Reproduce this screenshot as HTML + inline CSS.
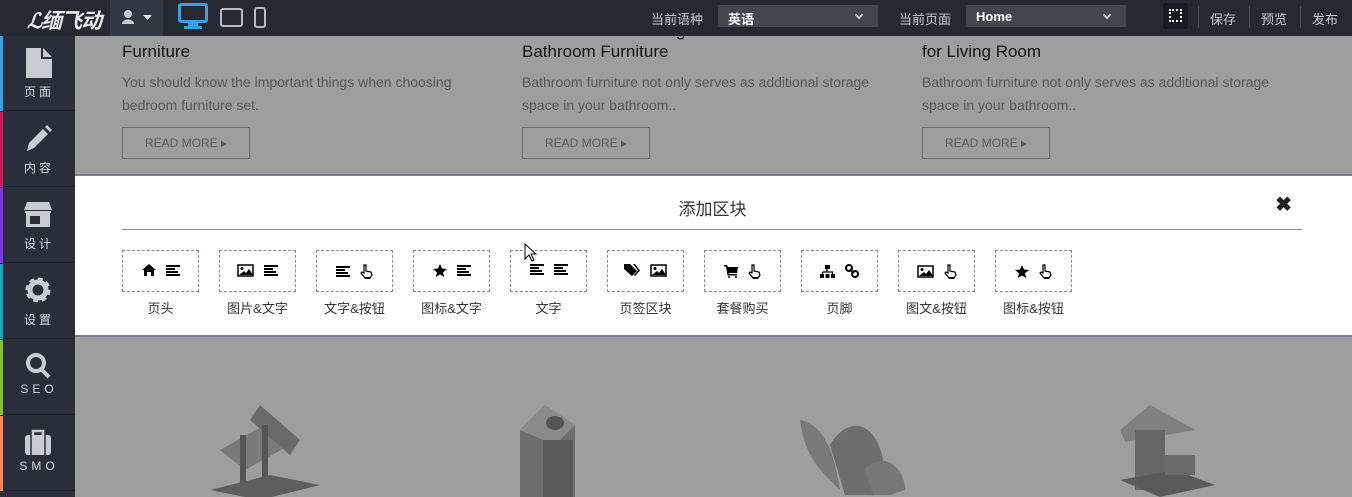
<!DOCTYPE html>
<html><head><meta charset="utf-8">
<style>
*{margin:0;padding:0;box-sizing:border-box}
body{width:1352px;height:497px;overflow:hidden;background:#9e9e9e;font-family:"Liberation Sans","Noto Sans CJK SC",sans-serif;position:relative}
.top{position:absolute;left:0;top:0;width:1352px;height:36px;background:#262932;color:#c9cbd2;font-size:13px}
.top .t{position:absolute;top:9px}
.sel{position:absolute;top:5px;height:22px;background:#43464d;color:#fff;font-size:13px;font-weight:bold;padding:4px 10px}
.sel .ch{position:absolute;right:16px;top:7px;width:6px;height:6px;border-right:2px solid #ccc;border-bottom:2px solid #ccc;transform:rotate(45deg)}
.sep{position:absolute;top:6px;width:1px;height:22px;background:#444851}
.side{position:absolute;left:0;top:36px;width:75px;height:461px;background:#2a2e3b}
.it{position:absolute;left:0;width:75px;height:75px;border-bottom:1px solid #1f222c}
.it .bar{position:absolute;left:0;top:0;width:3px;height:75px}
.it .lb{position:absolute;left:0;width:75px;text-align:center;top:47px;color:#d8dae3;font-size:12px;letter-spacing:3px;padding-left:3px}
.it svg{position:absolute;left:24px;top:12px}
.art{position:absolute;top:0;width:380px}
.art .h{position:absolute;top:20px;left:0;font-size:17px;color:#151515;line-height:21px;white-space:nowrap}
.art .d{position:absolute;top:71px;left:0;font-size:14px;color:#575757;line-height:23px;white-space:nowrap}
.art .b{position:absolute;top:127px;left:0;width:128px;height:32px;border:1px solid #6e6e6e;font-size:12px;color:#5a5a5a;text-align:center;line-height:30px}
.panel{position:absolute;left:75px;top:174px;width:1277px;height:163px;background:#fff;border-top:2px solid #7a7f98;border-bottom:2px solid #7a7f98}
.blk{position:absolute;top:74px;width:77px;height:42px;border:1px dashed #8a84a6}
.blk .ic{position:absolute;left:0;right:0;top:13px;text-align:center;font-size:0}
.blk .ic svg{margin:0 5px;vertical-align:middle}
.bl{position:absolute;top:124px;width:77px;text-align:center;font-size:13px;color:#333}
</style></head><body>
<div class="side">
 <div class="it" style="top:0"><div class="bar" style="background:#3b9fe0"></div><svg width="28" height="30" viewBox="0 0 28 30"><path d="M2 0h15v11h11v19H2zM19 0l9 9h-9z" fill="#c9cbd4"/></svg><div class="lb">页面</div></div>
 <div class="it" style="top:76px"><div class="bar" style="background:#c21e56"></div><svg width="28" height="30" viewBox="0 0 28 30"><path d="M3 27l2-8L19 5l5 5-14 14zM21 3l2-2 5 5-2 2z" fill="#c9cbd4"/></svg><div class="lb">内容</div></div>
 <div class="it" style="top:152px"><div class="bar" style="background:#7b3ad4"></div><svg width="28" height="30" viewBox="0 0 28 30"><path d="M3 2h22l3 8H0zM1 11h26v2H1zM2 13h24v14H2z" fill="#c9cbd4"/><rect x="6" y="16" width="10" height="8" fill="#2a2e3b"/></svg><div class="lb">设计</div></div>
 <div class="it" style="top:228px"><div class="bar" style="background:#1ca3bb"></div><svg width="28" height="30" viewBox="0 0 28 30"><circle cx="14" cy="14" r="9" fill="none" stroke="#c9cbd4" stroke-width="7" stroke-dasharray="4 3"/><circle cx="14" cy="14" r="8" fill="none" stroke="#c9cbd4" stroke-width="5"/></svg><div class="lb">设置</div></div>
 <div class="it" style="top:304px"><div class="bar" style="background:#8bbb3b"></div><svg width="28" height="30" viewBox="0 0 28 30"><circle cx="12" cy="11" r="8" fill="none" stroke="#c9cbd4" stroke-width="4"/><path d="M17 17l8 8" stroke="#c9cbd4" stroke-width="4"/></svg><div class="lb" style="letter-spacing:4px;top:42px">SEO</div></div>
 <div class="it" style="top:380px"><div class="bar" style="background:#f58a58"></div><svg width="28" height="30" viewBox="0 0 28 30"><path d="M9 7V3h10v4" fill="none" stroke="#c9cbd4" stroke-width="2.5"/><rect x="1" y="7" width="26" height="20" rx="3" fill="#c9cbd4"/><path d="M7 7v20M21 7v20" stroke="#2a2e3b" stroke-width="1.5"/></svg><div class="lb" style="letter-spacing:4px;top:43px">SMO</div></div>
</div>

<div class="art" style="left:122px"><div class="h">How to Choose Bedroom<br>Furniture</div><div class="d">You should know the important things when choosing<br>bedroom furniture set.</div><div class="b">READ MORE ▸</div></div>
<div class="art" style="left:522px"><div class="h">How to Select the Right<br>Bathroom Furniture</div><div class="d">Bathroom furniture not only serves as additional storage<br>space in your bathroom..</div><div class="b">READ MORE ▸</div></div>
<div class="art" style="left:922px"><div class="h">How to Choose Furniture<br>for Living Room</div><div class="d">Bathroom furniture not only serves as additional storage<br>space in your bathroom..</div><div class="b">READ MORE ▸</div></div>

<svg style="position:absolute;left:200px;top:395px" width="130" height="102"><path d="M20 55l45-25 25 20-45 25z" fill="#7a7a7a"/><path d="M60 10l40 35-10 15-40-35z" fill="#6a6a6a"/><rect x="40" y="40" width="6" height="55" fill="#555"/><rect x="62" y="30" width="6" height="65" fill="#555"/><path d="M10 95l60-15 50 10-60 15z" fill="#5e5e5e"/></svg>
<svg style="position:absolute;left:515px;top:405px" width="80" height="92"><path d="M5 25L30 0l30 20v72H5z" fill="#6e6e6e"/><path d="M30 0l30 20-20 20L5 25z" fill="#8a8a8a"/><ellipse cx="40" cy="18" rx="9" ry="7" fill="#555"/><path d="M28 35h30v57H28z" fill="#5a5a5a"/></svg>
<svg style="position:absolute;left:795px;top:415px" width="135" height="80"><path d="M5 5c25 5 35 35 40 70C30 60 10 45 5 5z" fill="#7a7a7a"/><path d="M35 30c20-35 60-25 55 55L50 80z" fill="#6e6e6e"/><path d="M70 55c15-20 40-5 40 20l-30 10z" fill="#777"/></svg>
<svg style="position:absolute;left:1105px;top:405px" width="120" height="92"><path d="M15 25L45 0l45 25-70 12z" fill="#808080"/><rect x="30" y="25" width="30" height="60" fill="#666"/><path d="M15 75l55-10 40 15-55 12z" fill="#5a5a5a"/><rect x="60" y="50" width="30" height="20" fill="#6a6a6a"/></svg>

<div class="panel">
 <div style="position:absolute;left:0;width:1275px;top:19px;text-align:center;font-size:17px;color:#333">添加区块</div>
 <div style="position:absolute;right:60px;top:16px;font-size:20px;font-weight:bold;color:#222">✖</div>
 <div style="position:absolute;left:47px;top:53px;width:1180px;height:1px;background:#8a8ba0"></div>
</div>

<div class="top">
 <div style="position:absolute;left:27px;top:5px;font-size:21px;font-style:italic;font-weight:bold;color:#e8e8e8;letter-spacing:-1px">&#x2112;缅飞动</div>
 <div style="position:absolute;left:110px;top:0;width:53px;height:36px;background:#333743"><svg style="position:absolute;left:12px;top:10px" width="30" height="14"><circle cx="6" cy="4" r="4" fill="#c9cbd4"/><path d="M0 14c0-6 12-6 12 0z" fill="#c9cbd4"/><path d="M21 5h9l-4.5 5z" fill="#e0e0e0"/></svg></div>
 <svg style="position:absolute;left:178px;top:3px" width="30" height="26"><rect x="1.5" y="1.5" width="27" height="17" rx="1.5" fill="none" stroke="#3b9fe0" stroke-width="3"/><path d="M10 20h10v3h4v3H6v-3h4z" fill="#3b9fe0"/></svg>
 <svg style="position:absolute;left:220px;top:8px" width="23" height="19"><rect x="1" y="1" width="21" height="17" rx="2" fill="none" stroke="#b8bac2" stroke-width="2"/></svg>
 <svg style="position:absolute;left:254px;top:7px" width="12" height="21"><rect x="1" y="1" width="10" height="19" rx="2" fill="none" stroke="#b8bac2" stroke-width="2"/></svg>
 <div class="t" style="left:651px">当前语种</div>
 <div class="sel" style="left:718px;width:160px">英语<span class="ch"></span></div>
 <div class="t" style="left:899px">当前页面</div>
 <div class="sel" style="left:966px;width:160px">Home<span class="ch"></span></div>
 <div style="position:absolute;left:1163px;top:3px;width:25px;height:26px;background:#181a1f;border-radius:3px"><div style="position:absolute;left:6px;top:6px;width:13px;height:13px;border:2px dotted #fff"></div></div>
 <div class="sep" style="left:1198px"></div><div class="t" style="left:1210px">保存</div>
 <div class="sep" style="left:1249px"></div><div class="t" style="left:1261px">预览</div>
 <div class="sep" style="left:1300px"></div><div class="t" style="left:1312px">发布</div>
</div>

<div style="position:absolute;left:0;top:0">
<div class="blk" style="left:122px;top:250px"><div class="ic"><svg width="14" height="12" viewBox="0 0 14 12"><path d="M7 0l7 6h-2v6H9V8H5v4H2V6H0z"/></svg><svg width="14" height="11" viewBox="0 0 14 11"><path d="M0 0h14v2H0zM0 3h9v2H0zM0 6h12v2H0zM0 9h14v2H0z"/></svg></div></div>
<div class="bl" style="left:122px;top:298px">页头</div>
<div class="blk" style="left:219px;top:250px"><div class="ic"><svg width="17" height="13" viewBox="0 0 17 13"><rect x="1" y="1" width="15" height="11" fill="none" stroke="#000" stroke-width="1.5"/><circle cx="5" cy="4.5" r="1.5"/><path d="M2 11l5-4 2 2 3-4 4 6z"/></svg><svg width="14" height="11" viewBox="0 0 14 11"><path d="M0 0h14v2H0zM0 3h9v2H0zM0 6h12v2H0zM0 9h14v2H0z"/></svg></div></div>
<div class="bl" style="left:219px;top:298px">图片&amp;文字</div>
<div class="blk" style="left:316px;top:250px"><div class="ic"><svg width="14" height="11" viewBox="0 0 14 11"><path d="M0 0h14v2H0zM0 3h9v2H0zM0 6h12v2H0zM0 9h14v2H0z"/></svg><svg width="13" height="15" viewBox="0 0 13 15"><path d="M4 1h2v6l5 1 1 3-2 3H5L1 9l1-1 2 1z" fill="none" stroke="#000" stroke-width="1.2"/><rect x="5" y="13" width="5" height="2"/></svg></div></div>
<div class="bl" style="left:316px;top:298px">文字&amp;按钮</div>
<div class="blk" style="left:413px;top:250px"><div class="ic"><svg width="14" height="13" viewBox="0 0 14 13"><path d="M7 0l2 4.5 5 .5-4 3.3 1.2 4.7L7 10.5 2.8 13 4 8.3 0 5l5-.5z"/></svg><svg width="14" height="11" viewBox="0 0 14 11"><path d="M0 0h14v2H0zM0 3h9v2H0zM0 6h12v2H0zM0 9h14v2H0z"/></svg></div></div>
<div class="bl" style="left:413px;top:298px">图标&amp;文字</div>
<div class="blk" style="left:510px;top:250px"><div class="ic"><svg width="14" height="11" viewBox="0 0 14 11"><path d="M0 0h14v2H0zM0 3h9v2H0zM0 6h12v2H0zM0 9h14v2H0z"/></svg><svg width="14" height="11" viewBox="0 0 14 11"><path d="M0 0h14v2H0zM0 3h9v2H0zM0 6h12v2H0zM0 9h14v2H0z"/></svg></div></div>
<div class="bl" style="left:510px;top:298px">文字</div>
<div class="blk" style="left:607px;top:250px"><div class="ic"><svg width="16" height="13" viewBox="0 0 16 13"><path d="M0 0h6l7 7-5 5-8-7z"/><path d="M9 0h2l5 6.5-5 5.5-1-1 4-4.5z"/></svg><svg width="17" height="13" viewBox="0 0 17 13"><rect x="1" y="1" width="15" height="11" fill="none" stroke="#000" stroke-width="1.5"/><circle cx="5" cy="4.5" r="1.5"/><path d="M2 11l5-4 2 2 3-4 4 6z"/></svg></div></div>
<div class="bl" style="left:607px;top:298px">页签区块</div>
<div class="blk" style="left:704px;top:250px"><div class="ic"><svg width="14" height="13" viewBox="0 0 14 13"><path d="M0 0h3l1 2h10l-1 6H4.5L5 9h8v1.5H3.5L2 1.5H0z"/><circle cx="5" cy="12" r="1"/><circle cx="12" cy="12" r="1"/></svg><svg width="13" height="15" viewBox="0 0 13 15"><path d="M4 1h2v6l5 1 1 3-2 3H5L1 9l1-1 2 1z" fill="none" stroke="#000" stroke-width="1.2"/><rect x="5" y="13" width="5" height="2"/></svg></div></div>
<div class="bl" style="left:704px;top:298px">套餐购买</div>
<div class="blk" style="left:801px;top:250px"><div class="ic"><svg width="15" height="13" viewBox="0 0 15 13"><rect x="5" y="0" width="5" height="4"/><path d="M7 4v3M2.5 7h10v3M2.5 7v3" fill="none" stroke="#000" stroke-width="1.3"/><rect x="0" y="9" width="4" height="4"/><rect x="5.5" y="9" width="4" height="4"/><rect x="11" y="9" width="4" height="4"/></svg><svg width="14" height="14" viewBox="0 0 14 14"><rect x="1" y="1" width="6" height="6" rx="3" fill="none" stroke="#000" stroke-width="2"/><rect x="7" y="7" width="6" height="6" rx="3" fill="none" stroke="#000" stroke-width="2"/><path d="M5 5l4 4" stroke="#000" stroke-width="2"/></svg></div></div>
<div class="bl" style="left:801px;top:298px">页脚</div>
<div class="blk" style="left:898px;top:250px"><div class="ic"><svg width="17" height="13" viewBox="0 0 17 13"><rect x="1" y="1" width="15" height="11" fill="none" stroke="#000" stroke-width="1.5"/><circle cx="5" cy="4.5" r="1.5"/><path d="M2 11l5-4 2 2 3-4 4 6z"/></svg><svg width="13" height="15" viewBox="0 0 13 15"><path d="M4 1h2v6l5 1 1 3-2 3H5L1 9l1-1 2 1z" fill="none" stroke="#000" stroke-width="1.2"/><rect x="5" y="13" width="5" height="2"/></svg></div></div>
<div class="bl" style="left:898px;top:298px">图文&amp;按钮</div>
<div class="blk" style="left:995px;top:250px"><div class="ic"><svg width="14" height="13" viewBox="0 0 14 13"><path d="M7 0l2 4.5 5 .5-4 3.3 1.2 4.7L7 10.5 2.8 13 4 8.3 0 5l5-.5z"/></svg><svg width="13" height="15" viewBox="0 0 13 15"><path d="M4 1h2v6l5 1 1 3-2 3H5L1 9l1-1 2 1z" fill="none" stroke="#000" stroke-width="1.2"/><rect x="5" y="13" width="5" height="2"/></svg></div></div>
<div class="bl" style="left:995px;top:298px">图标&amp;按钮</div>
<svg style="position:absolute;left:524px;top:243px" width="14" height="20"><path d="M1 1v15l4-4 3 6 2-1-3-6h5z" fill="#fff" stroke="#000"/></svg>
</div>
</body></html>
